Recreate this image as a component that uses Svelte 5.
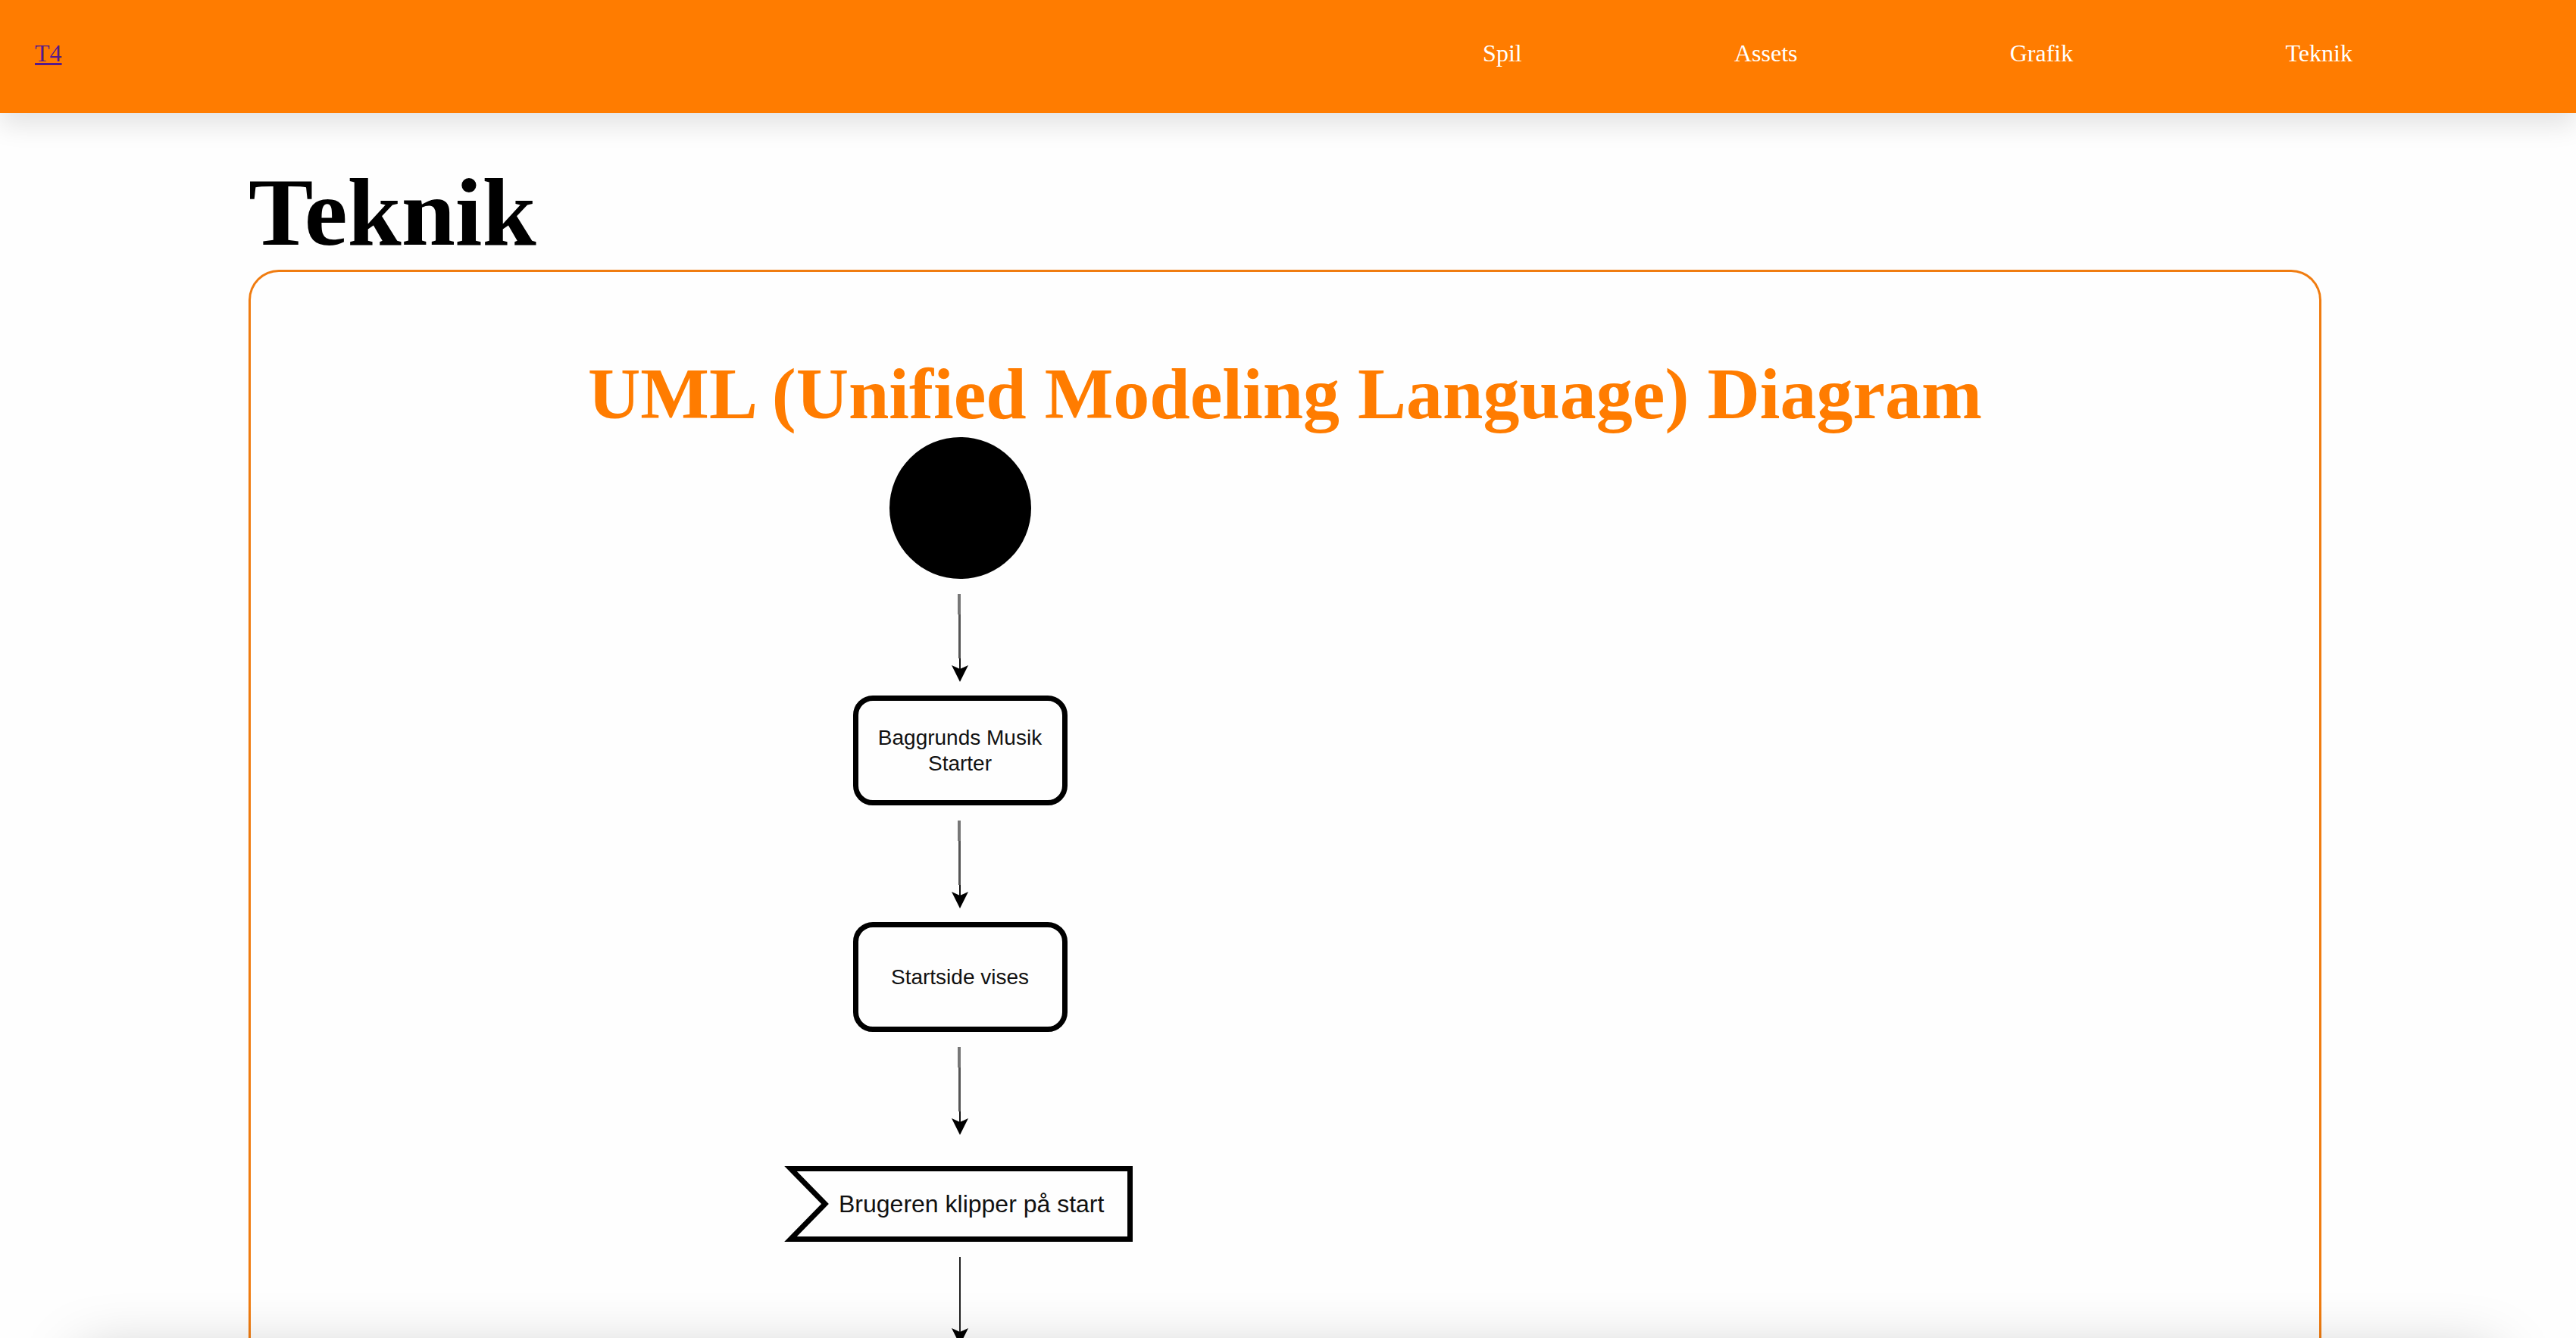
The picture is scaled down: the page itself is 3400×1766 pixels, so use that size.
<script>
  const links = ['Spil', 'Assets', 'Grafik', 'Teknik'];
</script>

{#snippet arrow()}
  <svg class="arrow" width="24" height="116" viewBox="0 0 24 116" aria-hidden="true">
    <path d="M11 1 V28" fill="none" stroke="#777" stroke-width="4" />
    <path d="M11.500 28 V86" fill="none" stroke="#555" stroke-width="3" />
    <path d="M12 86 V102" fill="none" stroke="#111" stroke-width="2" />
    <path d="M12 117 L1 95 L12 100 L23 95 Z" fill="#000" />
  </svg>
{/snippet}

{#snippet solidArrow()}
  <svg class="arrow" width="24" height="116" viewBox="0 0 24 116" aria-hidden="true">
    <path d="M12 1 V102" fill="none" stroke="#222" stroke-width="2" />
    <path d="M12 117 L1 95 L12 100 L23 95 Z" fill="#000" />
  </svg>
{/snippet}

<div class="page">
  <header class="navbar">
    <a class="logo" href="#top">T4</a>
    <nav>
      <ul>
        {#each links as link}
          <li><a href="#{link.toLowerCase()}">{link}</a></li>
        {/each}
      </ul>
    </nav>
  </header>

  <main>
    <h1>Teknik</h1>
    <section class="card">
      <h2>UML (Unified Modeling Language) Diagram</h2>
      <div class="diagram">
        <div class="flow">
          <div class="start"></div>
          {@render arrow()}
          <div class="activity">Baggrunds Musik<br />Starter</div>
          {@render arrow()}
          <div class="activity">Startside vises</div>
          {@render arrow()}
          <div class="signal">
            <svg viewBox="0 0 460 100" aria-hidden="true">
              <path d="M8.500 3.500 H456.500 V96.500 H8.500 L54 50 Z" fill="none" stroke="#000" stroke-width="7" stroke-miterlimit="10" />
            </svg>
            <span>Brugeren klipper på start</span>
          </div>
          {@render solidArrow()}
        </div>
      </div>
    </section>
  </main>
  <div class="dock"></div>
</div>

<style>
  :global(body) {
    margin: 0;
    background: #fefefe;
  }

  .page {
    position: relative;
    height: 100vh;
    overflow: hidden;
    font-family: 'Liberation Serif', 'Times New Roman', serif;
    font-size: 32px;
    line-height: 36px;
    color: #000;
  }

  .navbar {
    display: flex;
    justify-content: space-between;
    box-sizing: border-box;
    height: 149px;
    padding: 52px 155px 0 46px;
    background: #ff7c00;
    box-shadow: 0 16px 32px rgba(0, 0, 0, 0.11);
  }

  .logo {
    color: #551a8b;
    text-decoration-thickness: 3px;
  }

  nav {
    width: 1428px;
    max-width: 80%;
  }

  ul {
    display: flex;
    justify-content: space-around;
    margin: 0;
    padding: 0;
    list-style: none;
  }

  li a {
    color: #fff;
    text-decoration: none;
  }

  main {
    padding: 58px 336px 0 328px;
  }

  h1 {
    margin: 0;
    padding-bottom: 2px;
    font-size: 128px;
    line-height: 147px;
  }

  .card {
    border: 3px solid #f07c10;
    border-bottom: 0;
    border-radius: 40px 40px 0 0;
    padding-top: 106px;
  }

  h2 {
    margin: 0;
    padding-bottom: 2px;
    font-size: 96px;
    line-height: 110px;
    text-align: center;
    color: #ff7c00;
  }

  .diagram {
    width: 1322px;
    max-width: 100%;
    margin: 0 auto;
    font-family: 'Liberation Sans', Arial, sans-serif;
  }

  .flow {
    display: flex;
    flex-direction: column;
    align-items: center;
    gap: 19px;
    width: 464px;
  }

  .arrow {
    display: block;
    flex: none;
    overflow: visible;
  }

  .start {
    width: 187px;
    height: 187px;
    border-radius: 50%;
    background: #000;
  }

  .activity {
    display: flex;
    align-items: center;
    justify-content: center;
    box-sizing: border-box;
    width: 283px;
    height: 145px;
    border: 7px solid #000;
    border-radius: 26px;
    font-size: 28px;
    line-height: 34px;
    text-align: center;
    color: #111;
  }

  .signal {
    display: grid;
    align-self: flex-start;
    width: 460px;
    margin-top: 23px;
    color: #111;
  }

  .signal svg,
  .signal span {
    grid-area: 1 / 1;
  }

  .signal span {
    align-self: center;
    padding-left: 72px;
    white-space: nowrap;
  }

  .dock {
    position: absolute;
    top: calc(100% + 24px);
    left: 108px;
    right: 108px;
    height: 200px;
    box-shadow: 0 0 80px rgba(0, 0, 0, 0.25);
  }
</style>
